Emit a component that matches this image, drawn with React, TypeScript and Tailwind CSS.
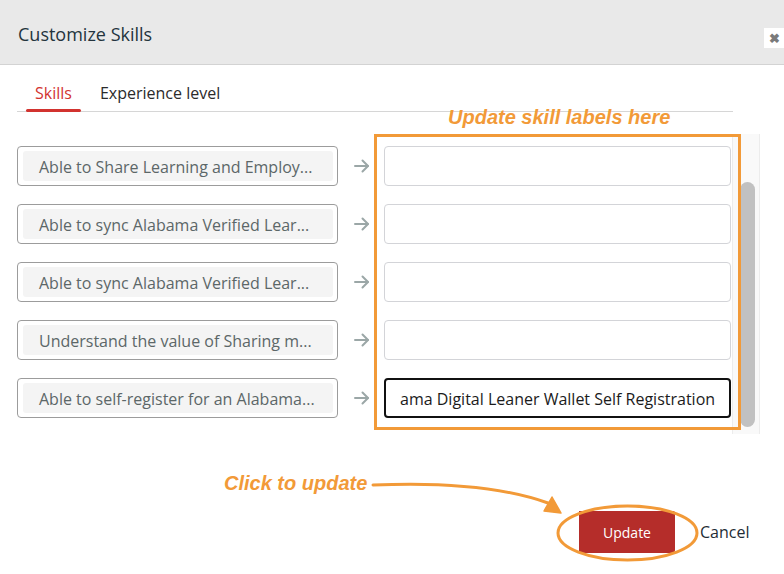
import React from "react";

const labels = [
  "Able to Share Learning and Employ...",
  "Able to sync Alabama Verified Lear...",
  "Able to sync Alabama Verified Lear...",
  "Understand the value of Sharing m...",
  "Able to self-register for an Alabama...",
];

function Arrow() {
  return (
    <svg width="16" height="14" viewBox="0 0 16 14" fill="none" stroke="#9ba7a7" strokeWidth="2" strokeLinecap="round" strokeLinejoin="round">
      <path d="M1 7h13" />
      <path d="M8.5 1.5L14 7l-5.5 5.5" />
    </svg>
  );
}

export default function App() {
  return (
    <div className="relative w-[784px] h-[574px] overflow-hidden bg-white font-['Open_Sans',sans-serif]">
      {/* Header */}
      <div className="relative h-[65px] bg-[#e9e9e9] border-b border-[#d3d3d3] flex items-center pl-[18px] pt-[4px]">
        <span className="text-[18px] text-[#23343d]">Customize Skills</span>
        <div className="absolute right-0 top-[28px] w-5 h-5 bg-white flex items-center justify-center">
          <span className="text-[13px] leading-none font-bold text-[#7a7a7a]">✖</span>
        </div>
      </div>

      {/* Tabs */}
      <div className="px-[17px] w-[750px]">
        <div className="flex h-[47px] border-b border-[#d6d6d6] pl-[9px]">
          <div className="relative px-[9px] flex items-center pt-[10px] text-[16px] text-[#d2332f]">
            Skills
            <div className="absolute left-0 right-0 bottom-[-1px] h-[3px] rounded-full bg-[#d2332f]" />
          </div>
          <div className="ml-[19px] flex items-center pt-[10px] text-[16px] text-[#2b2b2b]">Experience level</div>
        </div>
      </div>

      {/* List area */}
      <div className="mt-[22px] flex h-[301px]">
        <div className="w-[732px] pl-[17px] pt-[12px] flex flex-col gap-[18px]">
          {labels.map((l, i) => (
            <div key={i} className="flex items-center h-[40px]">
              <div className="w-[321px] h-[40px] border border-[#9c9c9c] rounded-[4px] p-[4px_4px_4px_5px]">
                <div className="h-full bg-[#f4f4f4] rounded-[3px] flex items-center pl-[16px] pt-[1px] text-[16px] text-[#5c6768] whitespace-nowrap overflow-hidden">
                  {l}
                </div>
              </div>
              <div className="w-[46px] flex justify-center pl-[2px]">
                <Arrow />
              </div>
              {i === 4 ? (
                <div className="w-[347px] h-[40px] border-2 border-[#111] rounded-[4px] flex items-center pl-[14px] pt-[1px] text-[16px] text-[#1b1b1b] whitespace-nowrap overflow-hidden">
                  ama Digital Leaner Wallet Self Registration
                </div>
              ) : (
                <div className="w-[347px] h-[40px] border border-[#d3d4d8] rounded-[4px] bg-white" />
              )}
            </div>
          ))}
        </div>
        {/* Scrollbar */}
        <div className="w-[28px] h-[300px] bg-[#f9f9f9] border-x border-[#ececec] relative">
          <div className="absolute left-[7px] top-[48px] w-[15px] h-[245px] rounded-full bg-[#c1c1c1]" />
        </div>
      </div>

      {/* Footer */}
      <div className="mt-[76px] flex items-center pl-[579px]">
        <div className="w-[96px] h-[42px] bg-[#b52d2a] rounded-br-[3px] rounded-tr-[2px] flex items-center justify-center text-[14px] text-white">
          Update
        </div>
        <span className="ml-[25px] text-[16px] text-[#1e2c35]">Cancel</span>
      </div>

      {/* Annotations */}
      <div className="absolute left-[374px] top-[134px] w-[367px] h-[296px] border-[3px] border-[#f29a38] pointer-events-none" />
      <div className="absolute left-[448px] top-[103px] text-[20px] leading-[28px] font-bold italic text-[#f29a38] font-['Liberation_Sans',Arial,sans-serif] whitespace-nowrap">
        Update skill labels here
      </div>
      <div className="absolute left-[224px] top-[469px] text-[20px] leading-[28px] font-bold italic text-[#f29a38] font-['Liberation_Sans',Arial,sans-serif] whitespace-nowrap">
        Click to update
      </div>
      <svg className="absolute left-0 top-0 pointer-events-none" width="784" height="574">
        <path d="M373 485 C 440 482, 500 486, 548 503" stroke="#f29a38" strokeWidth="3" fill="none" strokeLinecap="round" />
        <path d="M561 513 L 544 511 L 552 497 Z" fill="#f29a38" stroke="#f29a38" strokeWidth="1.5" strokeLinejoin="round" />
        <ellipse cx="627.5" cy="533" rx="69.5" ry="27" stroke="#f29a38" strokeWidth="3" fill="none" />
      </svg>
    </div>
  );
}
